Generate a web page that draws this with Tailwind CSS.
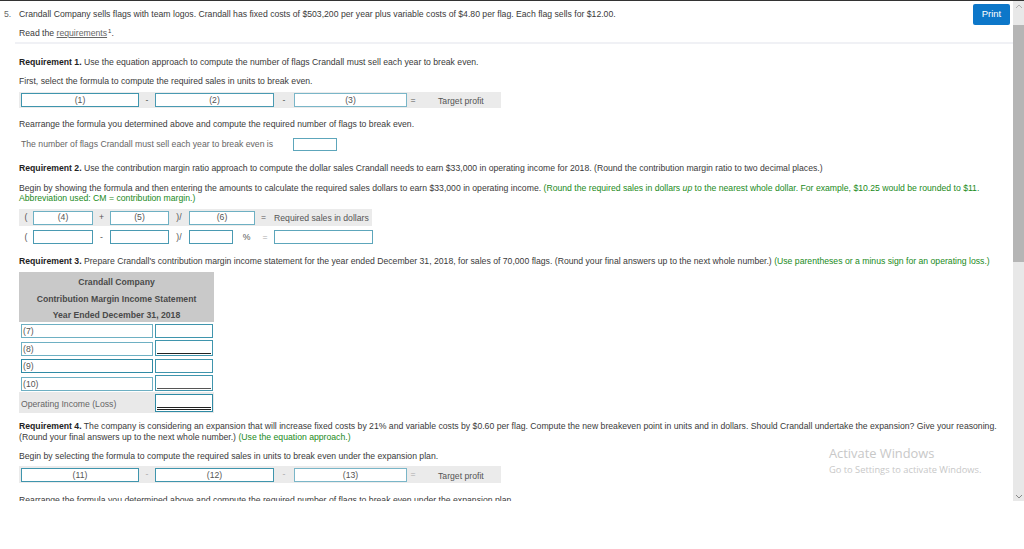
<!doctype html>
<html><head><meta charset="utf-8"><script src="https://cdn.jsdelivr.net/npm/@tailwindcss/browser@4"></script></head>
<body class="bg-white">
<div class="relative w-[1024px] h-[549px] overflow-hidden bg-white text-[#3a3a3a] text-[8.67px] font-['Liberation_Sans',Arial,sans-serif]">
<div class="h-px bg-[#333]"></div>
<div class="flex h-[500px]">
<main class="w-[1013px] h-[500px] overflow-hidden">
  <div class="h-[43px] border-b-2 border-[#f0f1f5] ml-[15px] relative">
    <div class="absolute -left-[11px] top-[8px] leading-[10px] text-[#666]">5.</div>
    <div class="absolute left-[4px] top-[8px] leading-[10px] whitespace-nowrap">Crandall Company sells flags with team logos. Crandall has fixed costs of $503,200 per year plus variable costs of $4.80 per flag. Each flag sells for $12.00.</div>
    <div class="absolute left-[4px] top-[27px] leading-[10px] whitespace-nowrap">Read the <span class="underline text-[#666]">requirements</span><sup class="text-[6px] ml-px">1</sup>.</div>
    <button class="absolute left-[958px] top-[3px] w-[37px] h-[21px] rounded-[2px] bg-[#0d77c9] text-white text-[9.5px]">Print</button>
  </div>
  <div class="pl-[19px]">
    <p class="mt-[13px] h-[10px] leading-[10px] whitespace-nowrap"><b class="text-[#222]">Requirement 1.</b> Use the equation approach to compute the number of flags Crandall must sell each year to break even.</p>
    <p class="mt-[9px] h-[10px] leading-[10px] whitespace-nowrap">First, select the formula to compute the required sales in units to break even.</p>
    <div class="mt-[6px] w-[482px] h-[16px] bg-[#ebebeb] flex items-center text-[#555]">
      <div class="ml-[2px] w-[118px] h-[14px] bg-white border border-[#3f95ad] text-center leading-[12px]">(1)</div>
      <div class="w-[16px] text-center">-</div>
      <div class="w-[119px] h-[14px] bg-white border border-[#4a9ab2] text-center leading-[12px]">(2)</div>
      <div class="w-[20px] text-center">-</div>
      <div class="w-[113px] h-[14px] bg-white border border-[#7ab6c8] text-center leading-[12px]">(3)</div>
      <div class="w-[12px] text-center">=</div>
      <div class="ml-[19px] pt-[2px] whitespace-nowrap">Target profit</div>
    </div>
    <p class="mt-[11px] h-[10px] leading-[10px] whitespace-nowrap">Rearrange the formula you determined above and compute the required number of flags to break even.</p>
    <div class="mt-[8px] flex items-center h-[14px] pl-[2px] text-[#666]">
      <span class="w-[272px] whitespace-nowrap pt-[1px]">The number of flags Crandall must sell each year to break even is</span>
      <div class="w-[44px] h-[13px] bg-white border border-[#5da6bb]"></div>
    </div>
    <p class="mt-[12px] h-[10px] leading-[10px] whitespace-nowrap"><b class="text-[#222]">Requirement 2.</b> Use the contribution margin ratio approach to compute the dollar sales Crandall needs to earn $33,000 in operating income for 2018. (Round the contribution margin ratio to two decimal places.)</p>
    <p class="mt-[10px] h-[10px] leading-[10px] whitespace-nowrap">Begin by showing the formula and then entering the amounts to calculate the required sales dollars to earn $33,000 in operating income. <span class="text-[#1a8a1a]">(Round the required sales in dollars <i>up</i> to the nearest whole dollar. For example, $10.25 would be rounded to $11.</span></p>
    <p class="h-[10px] leading-[10px] whitespace-nowrap text-[#1a8a1a]">Abbreviation used: CM = contribution margin.)</p>
    <div class="mt-[6px] w-[353px] h-[17px] bg-[#ebebeb] flex items-center text-[#555]">
      <div class="w-[14px] text-center">(</div>
      <div class="w-[60px] h-[14px] bg-white border border-[#6eb0c3] text-center leading-[11px]">(4)</div>
      <div class="w-[17px] text-center">+</div>
      <div class="w-[59px] h-[14px] bg-white border border-[#6eb0c3] text-center leading-[11px]">(5)</div>
      <div class="w-[20px] text-center">)/</div>
      <div class="w-[66px] h-[14px] bg-white border border-[#6eb0c3] text-center leading-[11px]">(6)</div>
      <div class="w-[17px] text-center">=</div>
      <div class="ml-[2px] pt-[2px] whitespace-nowrap">Required sales in dollars</div>
    </div>
    <div class="mt-[4px] w-[355px] h-[14px] flex items-center text-[#555]">
      <div class="w-[14px] text-center">(</div>
      <div class="w-[60px] h-[14px] bg-white border border-[#4a9ab2]"></div>
      <div class="w-[17px] text-center">-</div>
      <div class="w-[59px] h-[14px] bg-white border border-[#4a9ab2]"></div>
      <div class="w-[20px] text-center">)/</div>
      <div class="w-[44px] h-[14px] bg-white border border-[#4a9ab2]"></div>
      <div class="w-[27px] text-center">%</div>
      <div class="w-[10px] text-center text-[#aaa]">=</div>
      <div class="ml-[4px] w-[99px] h-[14px] bg-white border border-[#5da6bb]"></div>
    </div>
    <p class="mt-[12px] h-[10px] leading-[10px] whitespace-nowrap"><b class="text-[#222]">Requirement 3.</b> Prepare Crandall's contribution margin income statement for the year ended December 31, 2018, for sales of 70,000 flags. (Round your final answers up to the next whole number.) <span class="text-[#1a8a1a]">(Use parentheses or a minus sign for an operating loss.)</span></p>
    <div class="mt-[6px] w-[195px] text-[#555]">
      <div class="h-[50px] bg-[#c9c9c9] pt-[2px] text-center font-bold leading-[16.5px] text-[#4a4a4a]"><div>Crandall Company</div><div>Contribution Margin Income Statement</div><div>Year Ended December 31, 2018</div></div>
      <div class="h-[18px] flex items-center pl-[2px] gap-[2px]"><div class="w-[132px] h-[14px] bg-white border border-[#6eb0c3] pl-[1px] leading-[12px]">(7)</div><div class="w-[58px] h-[14px] border border-[#3f95ad]"></div></div>
      <div class="h-[17px] flex items-end pb-[1px] pl-[2px] gap-[2px]"><div class="w-[132px] h-[14px] bg-white border border-[#6eb0c3] pl-[1px] leading-[12px]">(8)</div><div class="w-[58px] h-[16px] border border-[#3f95ad] flex items-end px-[1px] pb-[1px]"><div class="w-full h-px bg-[#222]"></div></div></div>
      <div class="h-[17px] flex items-center pl-[2px] gap-[2px]"><div class="w-[132px] h-[14px] bg-white border border-[#2f8ba5] pl-[1px] leading-[12px]">(9)</div><div class="w-[58px] h-[14px] border border-[#3f95ad]"></div></div>
      <div class="h-[18px] flex items-end pb-[1px] pl-[2px] gap-[2px]"><div class="w-[132px] h-[14px] bg-white border border-[#6eb0c3] pl-[1px] leading-[12px]">(10)</div><div class="w-[58px] h-[16px] border border-[#3f95ad] flex items-end px-[1px] pb-[1px]"><div class="w-full h-px bg-[#555]"></div></div></div>
      <div class="h-[21px] bg-[#e9e9e9] flex items-center pl-[2px] gap-[2px]"><div class="w-[132px] pt-[3px] text-[#666] whitespace-nowrap">Operating Income (Loss)</div><div class="w-[58px] h-[18px] bg-white border border-[#2f8ba5] flex items-end px-[1px] pb-[1px]"><div class="w-full h-[3px] border-y border-[#222]"></div></div></div>
    </div>
    <p class="mt-[8px] h-[10px] leading-[10px] whitespace-nowrap"><b class="text-[#222]">Requirement 4.</b> The company is considering an expansion that will increase fixed costs by 21% and variable costs by $0.60 per flag. Compute the new breakeven point in units and in dollars. Should Crandall undertake the expansion? Give your reasoning.</p>
    <p class="mt-[1px] h-[10px] leading-[10px] whitespace-nowrap">(Round your final answers up to the next whole number.) <span class="text-[#1a8a1a]">(Use the equation approach.)</span></p>
    <p class="mt-[9px] h-[10px] leading-[10px] whitespace-nowrap">Begin by selecting the formula to compute the required sales in units to break even under the expansion plan.</p>
    <div class="mt-[5px] w-[482px] h-[17px] bg-[#ebebeb] flex items-center text-[#555]">
      <div class="ml-[2px] w-[118px] h-[14px] bg-white border border-[#3f95ad] text-center leading-[13px]">(11)</div>
      <div class="w-[16px] text-center text-[#aaa]">-</div>
      <div class="w-[119px] h-[14px] bg-white border border-[#3f95ad] text-center leading-[13px]">(12)</div>
      <div class="w-[20px] text-center text-[#aaa]">-</div>
      <div class="w-[113px] h-[14px] bg-white border border-[#7ab6c8] text-center leading-[13px]">(13)</div>
      <div class="w-[12px] text-center text-[#aaa]">=</div>
      <div class="ml-[19px] pt-[3px] whitespace-nowrap">Target profit</div>
    </div>
    <p class="mt-[12px] h-[10px] leading-[10px] whitespace-nowrap">Rearrange the formula you determined above and compute the required number of flags to break even under the expansion plan.</p>
  </div>
</main>
<aside class="w-[11px] h-[500px] bg-[#e8e8e8] flex flex-col">
  <div class="h-[24px] flex justify-center pt-[3px]"><svg width="8" height="5" viewBox="0 0 8 5" fill="none" stroke="#b0b0b0"><path d="M1 4l3-3 3 3"/></svg></div>
  <div class="h-[237px] bg-[#b5b5b5]"></div>
  <div class="flex-1 flex items-end justify-center pb-[2px]"><svg width="8" height="5" viewBox="0 0 8 5" fill="none" stroke="#888"><path d="M1 1l3 3 3-3"/></svg></div>
</aside>
</div>
<div class="absolute left-[829px] top-[445px] text-[#c8c8c8] font-['Open_Sans',sans-serif] whitespace-nowrap">
  <div class="text-[12.85px] leading-[17px]">Activate Windows</div>
  <div class="text-[9.3px] leading-[14px] mt-[1px]">Go to Settings to activate Windows.</div>
</div>
</div>
</body></html>
